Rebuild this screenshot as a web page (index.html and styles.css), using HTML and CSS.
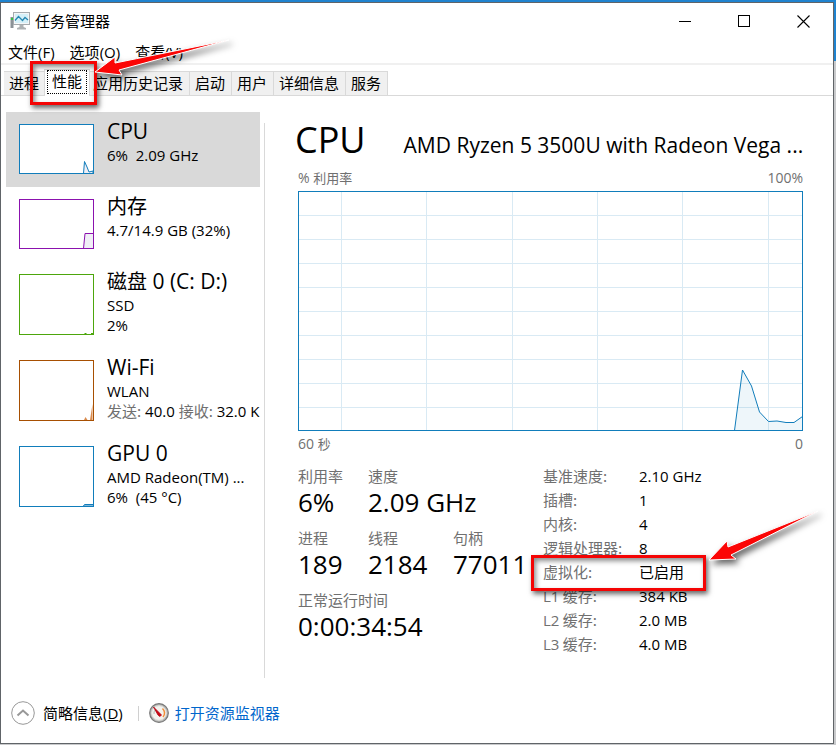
FILE: index.html
```html
<!DOCTYPE html>
<html lang="zh-CN">
<head>
<meta charset="utf-8">
<meta name="viewport" content="width=device-width, initial-scale=1">
<title>任务管理器</title>
<link rel="stylesheet" href="styles.css">
</head>
<body>
<div class="window">
  <header class="titlebar">
    <svg class="app-icon" width="20" height="18" viewBox="0 0 20 18" aria-hidden="true">
      <rect x="0.5" y="5" width="3" height="11" fill="#8b9297"/>
      <rect x="1" y="6" width="2" height="2" fill="#38c440"/>
      <rect x="3.5" y="0.5" width="16" height="12" fill="#f4f6f7" stroke="#a6abae"/>
      <rect x="5" y="2" width="13" height="9" fill="#d5f0f8"/>
      <path d="M5 8.5L8.500 4.500L12.500 8.500L15 5.500L18 8" fill="none" stroke="#2688b2" stroke-width="1.300"/>
      <path d="M9.500 13h4v2l2.500 1v1.500H7V16l2.500-1z" fill="#adb1b3"/>
    </svg>
    <h1 class="app-name">任务管理器</h1>
    <div class="window-buttons">
      <button type="button" aria-label="最小化"><svg width="13" height="13" viewBox="0 0 13 13"><path d="M0 6.500h12" stroke="#000"/></svg></button>
      <button type="button" aria-label="最大化"><svg width="13" height="13" viewBox="0 0 13 13"><rect x="0.500" y="0.500" width="11" height="11" fill="none" stroke="#000"/></svg></button>
      <button type="button" aria-label="关闭"><svg width="13" height="13" viewBox="0 0 13 13"><path d="M0.500 0.500l12 12M12.500 0.500l-12 12" stroke="#000" stroke-width="1.100"/></svg></button>
    </div>
  </header>

  <nav class="menu">
    <button type="button">文件<span class="latin">(F)</span></button>
    <button type="button">选项<span class="latin">(O)</span></button>
    <button type="button">查看<span class="latin">(V)</span></button>
  </nav>

  <div class="tabs" role="tablist">
    <button type="button" role="tab">进程</button>
    <div class="tab-slot">
      <button type="button" role="tab" aria-selected="true" class="active"><span class="focus">性能</span></button>
      <span class="mark mark-tab"></span>
      <svg class="arrow arrow-tab" width="150" height="60" viewBox="0 0 150 60" aria-hidden="true"><path d="M4 37L24 22L24 28L138 5L28 35L31 40Z"/></svg>
    </div>
    <button type="button" role="tab">应用历史记录</button>
    <button type="button" role="tab">启动</button>
    <button type="button" role="tab">用户</button>
    <button type="button" role="tab">详细信息</button>
    <button type="button" role="tab">服务</button>
  </div>

  <main class="main">
    <aside class="sidebar">
      <button type="button" class="item selected">
        <svg class="thumb cpu" viewBox="0 0 75 50"><path class="fill" d="M64.500 49.500L65.500 37.500L68 43L70 48L74 47V49.500z"/></svg>
        <span class="text"><span class="name">CPU</span><span class="sub">6%&nbsp; 2.09 GHz</span></span>
      </button>
      <button type="button" class="item">
        <svg class="thumb memory" viewBox="0 0 75 50"><path class="fill" d="M64.500 49.500L66 34.500H74.500V49.500z"/></svg>
        <span class="text"><span class="name"><span class="cjk">内存</span></span><span class="sub">4.7/14.9 GB (32%)</span></span>
      </button>
      <button type="button" class="item">
        <svg class="thumb tall disk" viewBox="0 0 75 61"><path d="M65.500 59.500h2M72 59.500h2"/></svg>
        <span class="text"><span class="name"><span class="cjk">磁盘</span> 0 (C: D:)</span><span class="sub">SSD</span><span class="sub">2%</span></span>
      </button>
      <button type="button" class="item">
        <svg class="thumb tall wifi" viewBox="0 0 75 61"><path class="soft" d="M65 60l1.500-3l2 3zM71 60l2.500-16v16z"/></svg>
        <span class="text"><span class="name">Wi-Fi</span><span class="sub">WLAN</span><span class="sub"><span class="muted cjk">发送:</span> 40.0 <span class="muted cjk">接收:</span> 32.0 K</span></span>
      </button>
      <button type="button" class="item">
        <svg class="thumb tall gpu" viewBox="0 0 75 61"><path class="fill" d="M64.500 60L65.500 58.500H74.500V60z"/></svg>
        <span class="text"><span class="name">GPU 0</span><span class="sub">AMD Radeon(TM) ...</span><span class="sub">6%&nbsp; (45 °C)</span></span>
      </button>
    </aside>

    <section class="detail">
      <div class="heading"><h2>CPU</h2><p>AMD Ryzen 5 3500U with Radeon Vega ...</p></div>
      <div class="axis top"><span>% <span class="axis-cjk">利用率</span></span><span>100%</span></div>
      <svg class="chart" viewBox="0 0 505 240" preserveAspectRatio="none" role="img" aria-label="CPU 利用率">
        <path class="grid" d="M43.500 0V240M128.500 0V240M214.500 0V240M299.500 0V240M384.500 0V240M470.500 0V240M0 24.500H505M0 48.500H505M0 72.500H505M0 96.500H505M0 120.500H505M0 144.500H505M0 168.500H505M0 192.500H505M0 216.500H505"/>
        <path class="curve" d="M436.500 239.500L444.500 179L453.500 195L461.500 221L470.500 230.500L479 230L488 231.500H496L504.500 225.500V239.500z"/>
        <rect class="frame" x="0.500" y="0.500" width="504" height="239"/>
      </svg>
      <div class="axis bottom"><span>60 <span class="axis-cjk">秒</span></span><span>0</span></div>

      <div class="figures">
        <dl class="stats">
          <div><dt>利用率</dt><dd>6%</dd></div>
          <div class="span-two"><dt>速度</dt><dd>2.09 GHz</dd></div>
          <div><dt>进程</dt><dd>189</dd></div>
          <div><dt>线程</dt><dd>2184</dd></div>
          <div><dt>句柄</dt><dd>77011</dd></div>
          <div class="span-all"><dt>正常运行时间</dt><dd>0:00:34:54</dd></div>
        </dl>
        <dl class="specs">
          <div><dt>基准速度:</dt><dd>2.10 GHz</dd></div>
          <div><dt>插槽:</dt><dd>1</dd></div>
          <div><dt>内核:</dt><dd>4</dd></div>
          <div><dt>逻辑处理器:</dt><dd>8</dd></div>
          <div class="marked"><dt>虚拟化:</dt><dd class="wide">已启用<span class="mark mark-spec"></span><svg class="arrow arrow-spec" width="125" height="70" viewBox="0 0 125 70" aria-hidden="true"><path d="M4 52L22 33L23 39L113 3L26 47L31 51Z"/></svg></dd></div>
          <div><dt><span class="latin">L1</span> 缓存:</dt><dd>384 KB</dd></div>
          <div><dt><span class="latin">L2</span> 缓存:</dt><dd>2.0 MB</dd></div>
          <div><dt><span class="latin">L3</span> 缓存:</dt><dd>4.0 MB</dd></div>
        </dl>
      </div>
    </section>
  </main>

  <footer class="footer">
    <button type="button" class="fewer">
      <svg width="24" height="24" viewBox="0 0 24 24" aria-hidden="true"><circle cx="12" cy="12" r="11.300" fill="#fff" stroke="#989898"/><path d="M6.500 14.500L12 9.500L17.500 14.500" fill="none" stroke="#989898" stroke-width="2"/></svg>
      <span>简略信息<span class="latin">(<u>D</u>)</span></span>
    </button>
    <a class="monitor" href="#">
      <svg width="20" height="20" viewBox="0 0 20 20" aria-hidden="true"><circle cx="10" cy="10" r="9.300" fill="#b9b9b6" stroke="#777" stroke-width="1.200"/><circle cx="10" cy="10" r="7.300" fill="#f4f3ee" stroke="#dededb"/><path d="M13.500 5.500A6 6 0 0 1 14 14" fill="none" stroke="#f28c38" stroke-width="1.500"/><path d="M5 11a5.500 5.500 0 0 1 1-4" fill="none" stroke="#b4bbb4"/><path d="M4.500 4L12.500 12L11 13.500L9 12z" fill="#cc0711" stroke="#b00010" stroke-width="0.800"/></svg>
      <span>打开资源监视器</span>
    </a>
  </footer>
</div>
</body>
</html>
```
FILE: styles.css
```css
* {
  box-sizing: border-box;
}

body {
  margin: 0;
  min-height: 100vh;
  display: flex;
  padding: 2px 2px 1px 0;
  background: linear-gradient(#1f83cf 0 61px, #c9cacc 61px);
  color: #000;
  font: 15px/20px "Noto Sans CJK SC", sans-serif;
}

h1, h2, p, dl, dd {
  margin: 0;
  font-weight: 400;
}

button {
  margin: 0;
  padding: 0;
  border: 0;
  background: none;
  color: inherit;
  font: inherit;
  text-align: left;
}

.latin {
  font-family: "Open Sans", sans-serif;
  font-size: 15px;
  line-height: 1;
}

.cjk {
  font-family: "Noto Sans CJK SC", sans-serif;
  font-size: 15px;
  line-height: 1;
}

.muted {
  color: #707070;
}

.window {
  flex: 1;
  min-width: 0;
  display: flex;
  flex-direction: column;
  border: 1px solid #606468;
  background: #fff;
  overflow: hidden;
}

.titlebar {
  display: flex;
  align-items: center;
  height: 36px;
  padding-left: 9px;
  gap: 5px;
}

.app-name {
  font-size: 15px;
}

.window-buttons {
  display: flex;
  margin-left: auto;
}

.window-buttons button {
  display: flex;
  align-items: center;
  justify-content: center;
  width: 59px;
  height: 36px;
}

.menu {
  display: flex;
  gap: 15px;
  padding: 3px 7px 1px;
  border-bottom: 2px solid #f0f0f0;
}

.tabs {
  display: flex;
  padding: 6px 3px 0;
  border-bottom: 1px solid #d9d9d9;
}

.tabs button {
  height: 24px;
  padding: 0 6px 2px 5px;
  border: solid #d9d9d9;
  border-width: 1px 1px 0 0;
  background: #f0f0f0;
  white-space: nowrap;
}

.tab-slot {
  position: relative;
  z-index: 2;
  margin: -2px -2px -1px;
}

.tabs .active {
  display: flex;
  height: 27px;
  padding: 0 2px;
  border-width: 1px 1px 0;
  background: #fff;
}

.focus {
  height: 24px;
  padding: 0 4px;
  border: 1px dotted #000;
}

.mark {
  position: absolute;
  border: 3px solid #f40404;
  box-shadow: 2px 3px 5px rgba(0, 0, 0, 0.6), inset 2px 3px 5px rgba(0, 0, 0, 0.45);
}

.mark-tab {
  inset: -8px -7px -9px -14px;
}

.arrow {
  position: absolute;
  overflow: visible;
  filter: drop-shadow(3px 4px 3px rgba(0, 0, 0, 0.6));
}

.arrow path {
  fill: #fb0505;
  stroke: #fff;
  stroke-width: 1;
}

.arrow-tab {
  left: 47px;
  top: -34px;
}

.main {
  flex: 1;
  display: flex;
  padding-top: 16px;
}

.sidebar {
  flex: 0 0 264px;
  width: 264px;
  padding-left: 5px;
  border-right: 1px solid #d9d9d9;
  border-image: linear-gradient(transparent 12px, #d9d9d9 12px) 1;
  overflow: hidden;
}

.item {
  display: flex;
  width: 254px;
  gap: 13px;
  padding: 12px 0 13px 13px;
}

.item.selected {
  background: #d9d9d9;
}

.thumb {
  flex: none;
  width: 75px;
  height: 50px;
  background: #fff;
  outline: 1px solid;
  outline-offset: -1px;
  stroke: currentColor;
}

.thumb.tall {
  height: 61px;
}

.thumb .fill {
  fill: #f0eff6;
}

.thumb .soft {
  fill: #d98c50;
  stroke: none;
}

.cpu, .gpu {
  color: #117dbb;
}

.memory {
  color: #8b12ae;
}

.disk {
  color: #4da60c;
}

.wifi {
  color: #a74f01;
}

.text {
  height: 50px;
  margin-top: -6px;
  font-family: "Open Sans", sans-serif;
  font-size: 15px;
  white-space: nowrap;
}

.text > span {
  display: block;
}

.name {
  font-size: 21px;
  line-height: 27px;
}

.name .cjk {
  font-size: 20px;
}

.detail {
  flex: 1;
  min-width: 0;
  padding: 8px 30px 0 33px;
}

.heading {
  display: flex;
  align-items: baseline;
  gap: 38px;
  margin-left: -3px;
  font-family: "Open Sans", sans-serif;
  line-height: 40px;
}

.heading h2 {
  font-size: 36px;
}

.heading p {
  font-size: 21px;
  white-space: nowrap;
}

.axis {
  display: flex;
  justify-content: space-between;
  color: #707070;
  font-family: "Open Sans", sans-serif;
  font-size: 14px;
}

.axis-cjk {
  font-family: "Noto Sans CJK SC", sans-serif;
  font-size: 13px;
  line-height: 1;
}

.axis.top {
  padding: 3px 0;
}

.axis.bottom {
  padding: 3px 0 12px;
}

.chart {
  display: block;
  width: 100%;
  height: 240px;
}

.grid {
  fill: none;
  stroke: #d9eaf4;
}

.curve {
  fill: rgba(17, 125, 187, 0.07);
  stroke: #117dbb;
}

.frame {
  fill: none;
  stroke: #117dbb;
}

.figures {
  display: flex;
}

.stats {
  display: grid;
  grid-template-columns: 70px 85px 90px;
  align-content: start;
  row-gap: 10px;
}

.span-two {
  grid-column: span 2;
}

.span-all {
  grid-column: 1 / -1;
}

dt {
  color: #707070;
}

dd {
  font-family: "Open Sans", sans-serif;
  white-space: nowrap;
}

.stats dd {
  font-size: 26px;
  line-height: 32px;
}

.specs dd {
  font-size: 15px;
}

.specs .wide {
  font-family: "Noto Sans CJK SC", sans-serif;
}

.specs > div {
  display: flex;
  padding-bottom: 4px;
}

.specs dt {
  width: 96px;
}

.specs .marked {
  position: relative;
}

.mark-spec {
  inset: -7px auto -5px -12px;
  width: 175px;
}

.arrow-spec {
  left: 162px;
  top: -54px;
}

.footer {
  display: flex;
  align-items: center;
  padding: 23px 10px 18px;
}

.fewer, .monitor {
  display: flex;
  align-items: center;
  gap: 8px;
}

.fewer::after {
  content: "";
  width: 1px;
  height: 15px;
  margin: 0 10px 0 7px;
  background: #d0d0d0;
}

.monitor {
  gap: 6px;
  color: #0066cc;
  text-decoration: none;
}
```
